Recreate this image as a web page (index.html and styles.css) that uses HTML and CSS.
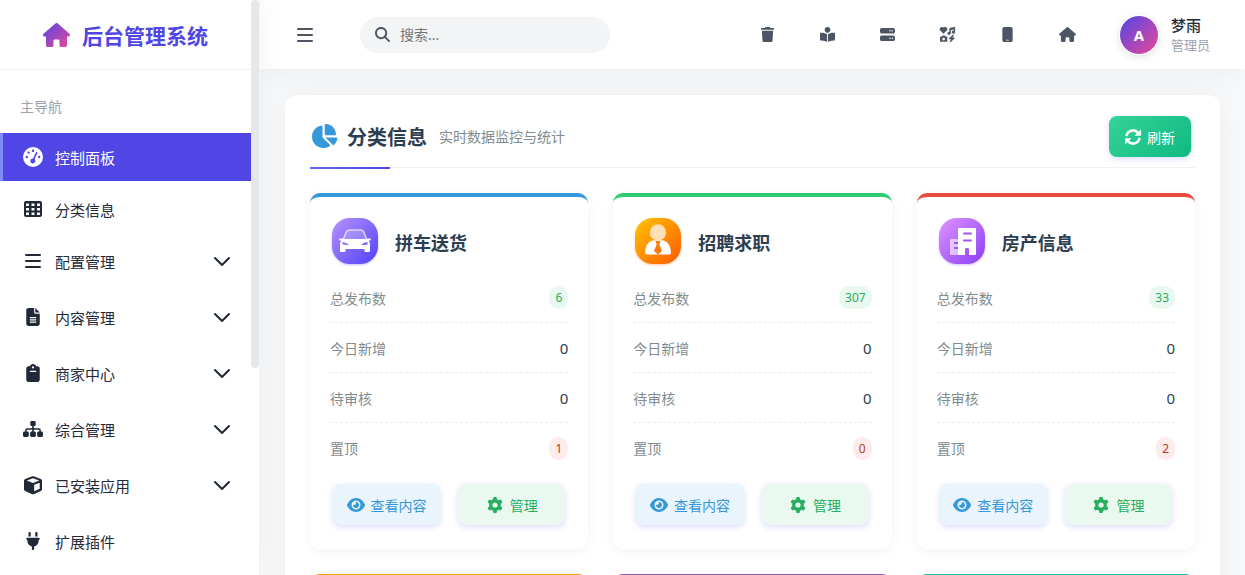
FILE: index.html
```html
<!DOCTYPE html>
<html lang="zh-CN">
<head>
    <meta charset="UTF-8">
    <meta name="viewport" content="width=device-width, initial-scale=1.0">
    <title>后台管理系统</title>
    <link rel="stylesheet" href="styles.css">
</head>
<body>
    <!-- 图标库 -->
    <svg class="sprite" aria-hidden="true">
        <defs>
            <linearGradient id="grad-logo" x1="0" y1="0" x2="1" y2="1">
                <stop offset="0" stop-color="#4f46e5"/><stop offset="1" stop-color="#ec4899"/>
            </linearGradient>
            <linearGradient id="grad-car" x1="0" y1="0" x2="1" y2="1">
                <stop offset="0" stop-color="#b794ff"/><stop offset="1" stop-color="#4f3ff5"/>
            </linearGradient>
            <linearGradient id="grad-job" x1="0" y1="0" x2="1" y2="1">
                <stop offset="0" stop-color="#ffc400"/><stop offset="1" stop-color="#ff5a00"/>
            </linearGradient>
            <linearGradient id="grad-house" x1="0" y1="0" x2="1" y2="1">
                <stop offset="0" stop-color="#dd94ff"/><stop offset="1" stop-color="#8b3df5"/>
            </linearGradient>
        </defs>
        <symbol id="i-home" viewBox="0 0 576 512">
            <path d="M575.8 255.5c0 18-15 32.1-32 32.1h-32l.7 160.2c0 2.7-.2 5.4-.5 8.1V472c0 22.1-17.9 40-40 40H392c-22.1 0-40-17.9-40-40V384c0-17.7-14.3-32-32-32H256c-17.7 0-32 14.3-32 32v88c0 22.1-17.9 40-40 40H104c-22.1 0-40-17.9-40-40V287.6H32c-18 0-32-14-32-32.1c0-9 3-17 10-24L266.4 8c7-7 15-8 22-8s15 2 21 7L564.8 231.5c8 7 12 15 11 24z"/>
        </symbol>
        <symbol id="i-gauge" viewBox="0 0 20 20">
            <path fill-rule="evenodd" d="M10 0a10 10 0 1 1 0 20a10 10 0 0 1 0-20zM10 2.5a1.2 1.2 0 1 0 0 2.4a1.2 1.2 0 0 0 0-2.4zM5.6 4.4a1.2 1.2 0 1 0 0 2.4a1.2 1.2 0 0 0 0-2.4zM3.8 8.8a1.2 1.2 0 1 0 0 2.4a1.2 1.2 0 0 0 0-2.4zM16.2 8.8a1.2 1.2 0 1 0 0 2.4a1.2 1.2 0 0 0 0-2.4zM13 5.2L10 11.4a2.5 2.5 0 1 0 1.6 .7L14.4 5.9a.8 .8 0 0 0-1.4-.7z"/>
        </symbol>
        <symbol id="i-table" viewBox="0 0 20 20">
            <path fill-rule="evenodd" d="M3 2h14a2 2 0 0 1 2 2v12a2 2 0 0 1-2 2H3a2 2 0 0 1-2-2V4a2 2 0 0 1 2-2zM3 4.5v2.5h3V4.500zM8.500 4.500v2.500h3V4.500zM14 4.500v2.500h3V4.500zM3 9v2.500h3V9zM8.500 9v2.500h3V9zM14 9v2.500h3V9zM3 13.500v2.500h3v-2.500zM8.500 13.500v2.500h3v-2.500zM14 13.500v2.500h3v-2.500z"/>
        </symbol>
        <symbol id="i-bars" viewBox="0 0 20 20">
            <path d="M3 3h14a1 1 0 0 1 0 2H3a1 1 0 0 1 0-2zM3 9h14a1 1 0 0 1 0 2H3a1 1 0 0 1 0-2zM3 15h14a1 1 0 0 1 0 2H3a1 1 0 0 1 0-2z"/>
        </symbol>
        <symbol id="i-file" viewBox="0 0 384 512">
            <path d="M64 0C28.7 0 0 28.7 0 64V448c0 35.3 28.7 64 64 64H320c35.3 0 64-28.7 64-64V160H256c-17.7 0-32-14.3-32-32V0H64zM256 0V128H384L256 0zM112 256H272c8.8 0 16 7.2 16 16s-7.2 16-16 16H112c-8.8 0-16-7.2-16-16s7.2-16 16-16zm0 64H272c8.8 0 16 7.2 16 16s-7.2 16-16 16H112c-8.8 0-16-7.2-16-16s7.2-16 16-16zm0 64H272c8.8 0 16 7.2 16 16s-7.2 16-16 16H112c-8.8 0-16-7.2-16-16s7.2-16 16-16z" fill-rule="evenodd"/>
        </symbol>
        <symbol id="i-clipboard" viewBox="0 0 384 512">
            <path fill-rule="evenodd" d="M192 0c-41.8 0-77.4 26.7-90.5 64H64C28.7 64 0 92.7 0 128V448c0 35.3 28.7 64 64 64H320c35.3 0 64-28.7 64-64V128c0-35.3-28.7-64-64-64H282.5C269.4 26.7 233.8 0 192 0zm0 64a32 32 0 1 1 0 64a32 32 0 1 1 0-64zM112 192H272c8.8 0 16 7.2 16 16s-7.2 16-16 16H112c-8.8 0-16-7.2-16-16s7.2-16 16-16z"/>
        </symbol>
        <symbol id="i-sitemap" viewBox="0 0 20 20">
            <path d="M8.5 2h3a1.2 1.2 0 0 1 1.2 1.2v2.6A1.2 1.2 0 0 1 11.5 7H10.8v2.2H16a1.8 1.8 0 0 1 1.8 1.8v1.6h.8A1.4 1.4 0 0 1 20 14v2.6a1.4 1.4 0 0 1-1.4 1.4h-3a1.4 1.4 0 0 1-1.4-1.4V14a1.4 1.4 0 0 1 1.4-1.4h.7V11a.3 .3 0 0 0-.3-.3h-5.2v1.9h.7a1.4 1.4 0 0 1 1.4 1.4v2.6a1.4 1.4 0 0 1-1.4 1.4h-3a1.4 1.4 0 0 1-1.4-1.4V14a1.4 1.4 0 0 1 1.4-1.4h.7v-1.9H4a.3 .3 0 0 0-.3 .3v1.6h.7A1.4 1.4 0 0 1 5.8 14v2.6A1.4 1.4 0 0 1 4.4 18h-3A1.4 1.4 0 0 1 0 16.6V14a1.4 1.4 0 0 1 1.4-1.4h.8V11A1.8 1.8 0 0 1 4 9.2h5.2V7h-.7a1.2 1.2 0 0 1-1.2-1.2V3.2A1.2 1.2 0 0 1 8.5 2z"/>
        </symbol>
        <symbol id="i-cube" viewBox="0 0 20 20">
            <path fill-rule="evenodd" d="M9.3 1.3a2 2 0 0 1 1.4 0l7.1 2.6A1.9 1.9 0 0 1 19 5.700v8.600a1.900 1.900 0 0 1-1.100 1.700l-7.100 3.200a2 2 0 0 1-1.600 0L2.100 16A1.900 1.900 0 0 1 1 14.300V5.700a1.900 1.900 0 0 1 1.200-1.800zM10 3.200L3.700 5.500L10 7.900l6.300-2.400zM11.200 16.300l5.500-2.500V7.700l-5.500 2.100z"/>
        </symbol>
        <symbol id="i-plug" viewBox="0 0 384 512">
            <path d="M96 0C78.3 0 64 14.3 64 32v96h64V32c0-17.700-14.300-32-32-32zM288 0c-17.700 0-32 14.300-32 32v96h64V32c0-17.700-14.300-32-32-32zM32 160c-17.700 0-32 14.300-32 32s14.300 32 32 32v32c0 77.400 55 142 128 156.800V480c0 17.700 14.300 32 32 32s32-14.300 32-32V412.800C297 398 352 333.400 352 256V224c17.700 0 32-14.300 32-32s-14.300-32-32-32H32z"/>
        </symbol>
        <symbol id="i-chevron" viewBox="0 0 18 18">
            <path d="M2 6L9 13L16 6" fill="none" stroke="currentColor" stroke-width="2" stroke-linecap="round" stroke-linejoin="round"/>
        </symbol>
        <symbol id="i-search" viewBox="0 0 512 512">
            <path d="M416 208c0 45.9-14.9 88.3-40 122.7L502.6 457.4c12.5 12.5 12.5 32.8 0 45.3s-32.8 12.5-45.3 0L330.7 376c-34.4 25.2-76.8 40-122.7 40C93.1 416 0 322.9 0 208S93.1 0 208 0S416 93.1 416 208zM208 352a144 144 0 1 0 0-288 144 144 0 1 0 0 288z"/>
        </symbol>
        <symbol id="i-trash" viewBox="0 0 448 512">
            <path d="M135.2 17.7L128 32H32C14.3 32 0 46.3 0 64S14.3 96 32 96H416c17.7 0 32-14.3 32-32s-14.3-32-32-32H320l-7.2-14.3C307.4 6.8 296.3 0 284.2 0H163.8c-12.1 0-23.2 6.8-28.6 17.7zM416 128H32L53.2 467c1.6 25.3 22.6 45 47.9 45H346.9c25.3 0 46.3-19.7 47.9-45L416 128z"/>
        </symbol>
        <symbol id="i-reader" viewBox="0 0 512 512">
            <path d="M160 96a96 96 0 1 1 192 0A96 96 0 1 1 160 96zm80 152V512l-48.4-24.2c-20.9-10.4-43.5-17-66.8-19.3l-96-9.6C12.5 457.2 0 443.5 0 427V224c0-17.7 14.3-32 32-32H62.3c63.6 0 125.6 19.6 177.7 56zm32 264V248c52.1-36.4 114.1-56 177.7-56H480c17.7 0 32 14.3 32 32V427c0 16.4-12.5 30.2-28.8 31.8l-96 9.6c-23.2 2.3-45.9 8.9-66.8 19.3L272 512z"/>
        </symbol>
        <symbol id="i-server" viewBox="0 0 512 512">
            <path fill-rule="evenodd" d="M64 32C28.7 32 0 60.7 0 96v64c0 35.3 28.7 64 64 64H448c35.3 0 64-28.7 64-64V96c0-35.3-28.7-64-64-64H64zm280 72a24 24 0 1 1 0 48 24 24 0 1 1 0-48zm48 24a24 24 0 1 1 48 0 24 24 0 1 1-48 0zM64 288c-35.3 0-64 28.7-64 64v64c0 35.3 28.7 64 64 64H448c35.3 0 64-28.7 64-64V352c0-35.3-28.7-64-64-64H64zm280 72a24 24 0 1 1 0 48 24 24 0 1 1 0-48zm56 24a24 24 0 1 1 48 0 24 24 0 1 1-48 0z"/>
        </symbol>
        <symbol id="i-icons" viewBox="0 0 16 16">
            <path d="M3.7 6.9L.6 3.800A2.100 2.100 0 0 1 3.700 .8A2.100 2.100 0 0 1 6.900 3.800z" stroke="currentColor" stroke-width=".6"/>
            <path d="M15.9 .6v4.900a1.600 1.400 0 1 1-1.200-1.300V2.500l-3.400 .9v3.300a1.600 1.400 0 1 1-1.200-1.300V2a.8 .8 0 0 1 .6-.8L15 0a.7 .7 0 0 1 .9 .6z" stroke="currentColor" stroke-width=".4"/>
            <path fill-rule="evenodd" d="M2.600 9h2.600l.6 1.200h1a1 1 0 0 1 1 1v3.600a1 1 0 0 1-1 1H1a1 1 0 0 1-1-1v-3.600a1 1 0 0 1 1-1h1zM3.900 11.500a1.400 1.400 0 1 0 0 2.800a1.400 1.400 0 0 0 0-2.800z"/>
            <path d="M13.700 8.500L9.800 12.100c-.3 .3-.1 .7 .3 .7h1.700l-1.100 2.600c-.2 .4 .2 .8 .6 .5l4-3.700c.3-.3 .1-.7-.3-.7h-1.700L14.400 9c.2-.4-.3-.8-.7-.5z" stroke="currentColor" stroke-width=".4"/>
        </symbol>
        <symbol id="i-mobile" viewBox="0 0 384 512">
            <path fill-rule="evenodd" d="M80 0C44.7 0 16 28.7 16 64V448c0 35.3 28.7 64 64 64H304c35.3 0 64-28.7 64-64V64c0-35.3-28.7-64-64-64H80zm80 432h64c8.8 0 16 7.2 16 16s-7.2 16-16 16H160c-8.8 0-16-7.2-16-16s7.2-16 16-16z"/>
        </symbol>
        <symbol id="i-pie" viewBox="0 0 576 512">
            <path d="M304 240V16.6c0-9 7-16.6 16-16.6C443.7 0 544 100.3 544 224c0 9-7.6 16-16.6 16H304zM32 272C32 150.7 122.1 50.3 239 34.3c9.2-1.3 17 6.1 17 15.4V288L412.5 444.5c6.7 6.7 6.2 17.7-1.5 23.1C371.8 495.6 323.8 512 272 512C139.5 512 32 404.6 32 272zm526.4 16c9.3 0 16.6 7.8 15.4 17c-7.7 55.9-34.6 105.6-73.9 142.3c-6 5.6-15.4 5.2-21.2-.7L320 288H558.4z"/>
        </symbol>
        <symbol id="i-refresh" viewBox="0 0 16 16">
            <path d="M1.5 7.2A6.500 6.500 0 0 1 13 3.900M14.500 8.800A6.500 6.500 0 0 1 3 12.100" fill="none" stroke="currentColor" stroke-width="2.600"/>
            <path d="M16 .5v5.500a.7 .7 0 0 1-.7 .7H9.500zM0 15.500v-5.500a.7 .7 0 0 1 .7-.7H6.500z"/>
        </symbol>
        <symbol id="i-eye" viewBox="0 0 576 512">
            <path fill-rule="evenodd" d="M288 32c-80.8 0-145.5 36.8-192.6 80.6C48.6 156 17.3 208 2.5 243.7c-3.3 7.9-3.3 16.7 0 24.6C17.3 304 48.6 356 95.4 399.4C142.5 443.2 207.2 480 288 480s145.5-36.8 192.6-80.6c46.8-43.5 78.1-95.4 93-131.1c3.3-7.9 3.3-16.7 0-24.6c-14.9-35.7-46.2-87.7-93-131.1C433.5 68.8 368.8 32 288 32zM144 256a144 144 0 1 1 288 0 144 144 0 1 1-288 0zm144-64c0 35.3-28.7 64-64 64c-7.1 0-13.9-1.2-20.3-3.3c-5.5-1.8-11.9 1.6-11.7 7.4c.3 6.9 1.3 13.8 3.2 20.7c13.7 51.2 66.4 81.6 117.600 67.900s81.600-66.400 67.900-117.600c-11.100-41.500-47.800-69.400-88.600-71.100c-5.800-.2-9.200 6.100-7.400 11.700c2.100 6.400 3.300 13.200 3.300 20.300z"/>
        </symbol>
        <symbol id="i-gear" viewBox="0 0 16 16">
            <path fill-rule="evenodd" d="M6.5 0h3l.5 2.300a6 6 0 0 1 1.700 1l2.200-.8l1.500 2.700l-1.700 1.600a6 6 0 0 1 0 2.400l1.700 1.600l-1.500 2.700l-2.200-.8a6 6 0 0 1-1.700 1L9.500 16h-3L6 13.700a6 6 0 0 1-1.700-1l-2.200 .8L.6 10.800l1.700-1.600a6 6 0 0 1 0-2.400L.6 5.200l1.500-2.700l2.200 .8a6 6 0 0 1 1.700-1zM8 5.400a2.600 2.600 0 1 0 0 5.200a2.600 2.600 0 0 0 0-5.200z"/>
        </symbol>
    </svg>

    <div class="sidebar">
        <div class="sidebar-body">
            <a href="#home" class="logo">
                <svg class="logo-icon"><use href="#i-home"/></svg>
                <span>后台管理系统</span>
            </a>
            <div class="nav-title">主导航</div>
            <nav class="menu">
                <a href="#dashboard" class="menu-item active"><svg><use href="#i-gauge"/></svg><span>控制面板</span></a>
                <a href="#category" class="menu-item"><svg><use href="#i-table"/></svg><span>分类信息</span></a>
                <a href="#config" class="menu-item has-sub"><svg><use href="#i-bars"/></svg><span>配置管理</span><svg class="arrow"><use href="#i-chevron"/></svg></a>
                <a href="#content" class="menu-item has-sub"><svg class="small"><use href="#i-file"/></svg><span>内容管理</span><svg class="arrow"><use href="#i-chevron"/></svg></a>
                <a href="#merchant" class="menu-item has-sub"><svg class="small"><use href="#i-clipboard"/></svg><span>商家中心</span><svg class="arrow"><use href="#i-chevron"/></svg></a>
                <a href="#general" class="menu-item has-sub"><svg><use href="#i-sitemap"/></svg><span>综合管理</span><svg class="arrow"><use href="#i-chevron"/></svg></a>
                <a href="#apps" class="menu-item has-sub"><svg><use href="#i-cube"/></svg><span>已安装应用</span><svg class="arrow"><use href="#i-chevron"/></svg></a>
                <a href="#plugins" class="menu-item"><svg class="small"><use href="#i-plug"/></svg><span>扩展插件</span></a>
            </nav>
        </div>
        <div class="scroll-track"><div class="scroll-thumb"></div></div>
    </div>

    <div class="main">
        <header class="topbar">
            <button type="button" class="toggle" aria-label="切换菜单"><svg><use href="#i-bars"/></svg></button>
            <label class="search">
                <svg><use href="#i-search"/></svg>
                <input type="text" placeholder="搜索..." aria-label="搜索">
            </label>
            <div class="tools">
                <button type="button" aria-label="清理缓存"><svg><use href="#i-trash"/></svg></button>
                <button type="button" aria-label="文档"><svg><use href="#i-reader"/></svg></button>
                <button type="button" aria-label="服务器"><svg><use href="#i-server"/></svg></button>
                <button type="button" aria-label="图标"><svg><use href="#i-icons"/></svg></button>
                <button type="button" aria-label="手机版"><svg><use href="#i-mobile"/></svg></button>
                <button type="button" aria-label="首页"><svg><use href="#i-home"/></svg></button>
            </div>
            <div class="user">
                <div class="avatar">A</div>
                <div class="user-text">
                    <div class="user-name">梦雨</div>
                    <div class="user-role">管理员</div>
                </div>
            </div>
        </header>

        <div class="panel">
            <div class="panel-header">
                <svg class="panel-icon"><use href="#i-pie"/></svg>
                <h2>分类信息</h2>
                <span class="subtitle">实时数据监控与统计</span>
                <button type="button" class="refresh"><svg><use href="#i-refresh"/></svg>刷新</button>
            </div>

            <div class="cards">
                <div class="card blue">
                    <div class="card-header">
                        <svg class="card-icon car" viewBox="0 0 50 50">
                            <rect x="2" y="1" width="46" height="46" rx="18" fill="url(#grad-car)"/>
                            <path d="M13.5 22L16 15.500Q17 13 19.500 13H30.500Q33 13 34 15.500L36.500 22" fill="#fff" fill-opacity=".2" stroke="#fff" stroke-opacity=".65" stroke-width="1.600"/>
                            <path fill="#fff" fill-rule="evenodd" d="M10 21.500h3l1.500 .5h21l1.500-.5h3a1 1 0 0 1 0 2h-1.500q1.500 1.500 1.500 4V34a1 1 0 0 1-1 1h-3.500a1 1 0 0 1-1-1v-2h-19v2a1 1 0 0 1-1 1H11a1 1 0 0 1-1-1v-6.500q0-2.500 1.500-4H10a1 1 0 0 1 0-2zM12.500 25v2.500l5 .5h1.500q-2-2.500-6.500-3zM37.500 25v2.500l-5 .5H31q2-2.500 6.500-3z"/>
                        </svg>
                        <h3>拼车送货</h3>
                    </div>
                    <div class="row"><span>总发布数</span><b class="badge ok">6</b></div>
                    <div class="row"><span>今日新增</span><b>0</b></div>
                    <div class="row"><span>待审核</span><b>0</b></div>
                    <div class="row"><span>置顶</span><b class="badge warn">1</b></div>
                    <div class="actions">
                        <button type="button" class="view"><svg><use href="#i-eye"/></svg>查看内容</button>
                        <button type="button" class="manage"><svg><use href="#i-gear"/></svg>管理</button>
                    </div>
                </div>

                <div class="card green">
                    <div class="card-header">
                        <svg class="card-icon job" viewBox="0 0 50 50">
                            <rect x="2" y="1" width="46" height="46" rx="18" fill="url(#grad-job)"/>
                            <path fill="#fff" d="M19 23.500Q25 22.500 31 23.500Q37.500 26 38 35.500Q38 37.500 36 37.500H14Q12 37.500 12 35.500Q12.500 26 19 23.500z"/>
                            <circle cx="25" cy="15.500" r="8.200" fill="#ffdfb8"/>
                            <path fill="#f97b0c" d="M22.500 24h5l-1.200 3.500l2.700 6.500l-4 3.500l-4-3.500l2.700-6.500z"/>
                        </svg>
                        <h3>招聘求职</h3>
                    </div>
                    <div class="row"><span>总发布数</span><b class="badge ok">307</b></div>
                    <div class="row"><span>今日新增</span><b>0</b></div>
                    <div class="row"><span>待审核</span><b>0</b></div>
                    <div class="row"><span>置顶</span><b class="badge warn">0</b></div>
                    <div class="actions">
                        <button type="button" class="view"><svg><use href="#i-eye"/></svg>查看内容</button>
                        <button type="button" class="manage"><svg><use href="#i-gear"/></svg>管理</button>
                    </div>
                </div>

                <div class="card red">
                    <div class="card-header">
                        <svg class="card-icon house" viewBox="0 0 50 50">
                            <rect x="2" y="1" width="46" height="46" rx="18" fill="url(#grad-house)"/>
                            <path fill="#fff" fill-opacity=".6" d="M14 22h7v16h-7a1 1 0 0 1-1-1V23a1 1 0 0 1 1-1z"/>
                            <path stroke="#a855f7" stroke-width="1.800" d="M17 26h4M17 31h4"/>
                            <path fill="#fff" d="M22 11h16a1 1 0 0 1 1 1v25a1 1 0 0 1-1 1h-6v-6a1 1 0 0 0-1-1h-2a1 1 0 0 0-1 1v6H21V12a1 1 0 0 1 1-1z"/>
                            <path stroke="#a855f7" stroke-width="2" stroke-linecap="round" d="M27 16.500h7M27 23.500h7"/>
                        </svg>
                        <h3>房产信息</h3>
                    </div>
                    <div class="row"><span>总发布数</span><b class="badge ok">33</b></div>
                    <div class="row"><span>今日新增</span><b>0</b></div>
                    <div class="row"><span>待审核</span><b>0</b></div>
                    <div class="row"><span>置顶</span><b class="badge warn">2</b></div>
                    <div class="actions">
                        <button type="button" class="view"><svg><use href="#i-eye"/></svg>查看内容</button>
                        <button type="button" class="manage"><svg><use href="#i-gear"/></svg>管理</button>
                    </div>
                </div>

                <div class="card orange"></div>
                <div class="card purple"></div>
                <div class="card teal"></div>
            </div>
        </div>
    </div>
</body>
</html>
```

FILE: styles.css
```css
* {
    box-sizing: border-box;
}
body {
    margin: 0;
    height: 100vh;
    display: flex;
    overflow: hidden;
    background-color: #f8f9fb;
    color: #1f2937;
    font-family: "Noto Sans", "Noto Sans CJK SC", sans-serif;
    font-size: 15px;
}
a {
    color: inherit;
    text-decoration: none;
}
button {
    border: none;
    background: none;
    padding: 0;
    font-family: inherit;
    font-size: 14px;
    cursor: pointer;
}
svg {
    fill: currentColor;
    flex-shrink: 0;
}
.sprite {
    position: absolute;
    width: 0;
    height: 0;
}
/* 侧边栏 */
.sidebar {
    width: 260px;
    flex-shrink: 0;
    display: flex;
    background-color: #fff;
    border-right: 1px solid #f3f4f6;
    box-shadow: 0 0 30px rgba(0, 0, 0, 0.05);
    position: relative;
    z-index: 2;
}
.sidebar-body {
    flex: 1;
    overflow-y: auto;
    scrollbar-width: none;
}
.scroll-track {
    width: 8px;
}
.scroll-thumb {
    height: 64%;
    border-radius: 4px;
    background-color: #e5e7eb;
}
.logo {
    height: 70px;
    display: flex;
    align-items: center;
    justify-content: center;
    gap: 12px;
    border-bottom: 1px solid #f0f0f2;
    color: #4f46e5;
    font-size: 21px;
    font-weight: bold;
}
.logo-icon {
    width: 27px;
    height: 24px;
    fill: url(#grad-logo);
}
.nav-title {
    padding: 26px 20px 15px;
    font-size: 14px;
    line-height: 22px;
    color: #9ca3af;
}
.menu-item {
    height: 48px;
    margin-bottom: 4px;
    padding: 0 20px;
    border-left: 3px solid transparent;
    display: flex;
    align-items: center;
    gap: 12px;
}
.menu-item.has-sub {
    margin-bottom: 8px;
}
.menu-item.active {
    background-color: #4f46e5;
    border-left-color: #818cf8;
    color: #fff;
}
.menu-item svg {
    width: 20px;
    height: 20px;
}
.menu-item svg.small {
    height: 18px;
}
.menu-item svg.arrow {
    width: 18px;
    height: 18px;
    margin-left: auto;
}
/* 顶部栏 */
.main {
    flex: 1;
    min-width: 0;
    overflow-y: auto;
    scrollbar-width: none;
}
.topbar {
    height: 69px;
    padding: 0 35px;
    display: flex;
    align-items: center;
    background-color: #fff;
    box-shadow: 0 0 30px rgba(0, 0, 0, 0.07);
    color: #4b5563;
}
.toggle {
    width: 20px;
    height: 20px;
    margin-right: 45px;
    color: inherit;
}
.toggle svg {
    display: block;
    width: 20px;
    height: 20px;
}
.search {
    width: 250px;
    height: 36px;
    padding: 0 15px;
    display: flex;
    align-items: center;
    gap: 8px;
    border-radius: 18px;
    background-color: #f3f4f6;
}
.search svg {
    width: 15px;
    height: 15px;
}
.search input {
    flex: 1;
    min-width: 0;
    border: none;
    outline: none;
    background: none;
    font-family: inherit;
    font-size: 14px;
}
.search input::placeholder {
    color: #757575;
}
.tools {
    margin-left: auto;
    display: flex;
    gap: 20px;
}
.tools button {
    width: 40px;
    height: 40px;
    display: flex;
    align-items: center;
    justify-content: center;
    color: inherit;
}
.tools svg {
    width: 17px;
    height: 15px;
}
.user {
    margin-left: 31px;
    display: flex;
    align-items: center;
    gap: 12px;
}
.avatar {
    width: 40px;
    height: 40px;
    border: 1px solid #fff;
    border-radius: 50%;
    display: flex;
    align-items: center;
    justify-content: center;
    background: linear-gradient(135deg, #4f46e5, #ec4899);
    box-shadow: 0 2px 8px rgba(0, 0, 0, 0.12);
    color: #fff;
    font-weight: bold;
}
.user-name {
    line-height: 20px;
    font-weight: 500;
    color: #1f2937;
}
.user-role {
    font-size: 13px;
    line-height: 20px;
    color: #9ca3af;
}
/* 内容面板 */
.panel {
    margin: 26px 25px;
    padding: 20px 25px 25px;
    background-color: #fff;
    border-radius: 12px;
    box-shadow: 0 0 30px rgba(0, 0, 0, 0.05);
}
.panel-header {
    padding-bottom: 10px;
    display: flex;
    align-items: center;
    color: #2c3e50;
    border-bottom: 1px solid #f0f0f0;
    position: relative;
}
/* 标题下划线 */
.panel-header::after {
    content: "";
    position: absolute;
    left: 0;
    bottom: -2px;
    width: 80px;
    height: 2px;
    background: linear-gradient(90deg, #6366f1, #4f46e5);
}
.panel-icon {
    width: 28px;
    height: 24px;
    margin-right: 9px;
    color: #3498db;
}
.panel-header h2 {
    margin: 0 12px 0 0;
    font-size: 20px;
}
.subtitle {
    font-size: 14px;
    color: #7f8c8d;
}
.refresh {
    height: 41px;
    margin: 1px 4px 0 auto;
    padding: 0 16px;
    display: flex;
    align-items: center;
    gap: 6px;
    border-radius: 8px;
    background: linear-gradient(135deg, #34d399, #10b981);
    box-shadow: 0 2px 6px rgba(79, 70, 229, 0.2);
    color: #fff;
}
.refresh svg {
    width: 16px;
    height: 16px;
}
/* 统计卡片 */
.cards {
    margin-top: 25px;
    display: grid;
    grid-template-columns: repeat(3, 1fr);
    gap: 25px;
}
.card {
    min-height: 356px;
    padding: 20px 20px 24px;
    border-top: 4px solid #3498db;
    border-radius: 10px;
    background-color: #fff;
    box-shadow: 0 2px 12px rgba(0, 0, 0, 0.05);
}
.card.green { border-top-color: #2ecc71; }
.card.red { border-top-color: #e74c3c; }
.card.orange { border-top-color: #f39c12; }
.card.purple { border-top-color: #9b59b6; }
.card.teal { border-top-color: #1abc9c; }
.card-header {
    margin-bottom: 6px;
    display: flex;
    align-items: center;
    gap: 15px;
}
.card-header h3 {
    margin: 0;
    font-size: 18px;
    color: #2c3e50;
}
.card-icon {
    width: 50px;
    height: 50px;
}
.car { filter: drop-shadow(0 1px 1px rgba(79, 63, 245, 0.35)); }
.job { filter: drop-shadow(0 1px 1px rgba(255, 90, 0, 0.35)); }
.house { filter: drop-shadow(0 1px 1px rgba(139, 61, 245, 0.35)); }
.row {
    height: 50px;
    display: flex;
    align-items: center;
    justify-content: space-between;
    border-bottom: 1px dashed #ececec;
    font-size: 14px;
    color: #7f8c8d;
}
.row:nth-child(5) {
    border-bottom: none;
}
.row b {
    font-size: 15px;
    font-weight: normal;
    color: #2c3e50;
}
.row .badge {
    padding: 0 6px;
    border-radius: 10px;
    font-size: 12px;
    line-height: 23px;
}
.row .ok {
    background-color: #e9f9f0;
    color: #27ae60;
}
.row .warn {
    background-color: #fdecea;
    color: #c0392b;
}
.actions {
    margin-top: 11px;
    padding: 0 3px;
    display: flex;
    gap: 18px;
}
.actions button {
    flex: 1;
    height: 41px;
    display: flex;
    align-items: center;
    justify-content: center;
    gap: 6px;
    border-radius: 8px;
    box-shadow: 0 2px 6px rgba(79, 70, 229, 0.2);
}
.actions svg {
    width: 18px;
    height: 16px;
}
.actions .view {
    background-color: #e9f4fc;
    color: #3498db;
}
.actions .manage {
    background-color: #e9f9f0;
    color: #27ae60;
}
```
